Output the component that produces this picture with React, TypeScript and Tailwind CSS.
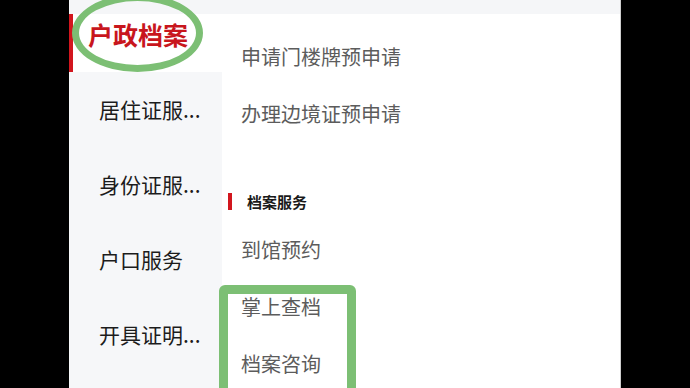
import React from 'react';

const font = { fontFamily: '"Noto Sans CJK SC", "Noto Sans", sans-serif' };

const sideItems = ['居住证服...', '身份证服...', '户口服务', '开具证明...'];

const App: React.FC = () => {
  return (
    <div className="relative w-[690px] h-[388px] bg-black flex overflow-hidden" style={font}>
      <div className="w-[69px] shrink-0" />
      <div className="w-[552px] shrink-0 flex flex-col bg-white border-r border-[#cfcfcf]">
        <div className="h-[14px] shrink-0 bg-[#f5f6f8]" />
        <div className="flex flex-1">
          {/* sidebar */}
          <div className="w-[153px] shrink-0 flex flex-col bg-[#f6f7f9]">
            <div className="relative h-[58px] bg-white flex items-center pl-[19px] pb-[18px]">
              <div className="absolute left-0 top-0 h-full w-[4px] bg-[#d2161e]" />
              <span className="text-[25px] font-bold text-[#c8161d] leading-none">户政档案</span>
            </div>
            {sideItems.map(item => (
              <div key={item} className="h-[75px] flex items-center pl-[30px]">
                <span className="text-[21px] text-[#1c1c1c] leading-none whitespace-nowrap">{item}</span>
              </div>
            ))}
          </div>

          {/* content */}
          <div className="flex-1 flex flex-col pt-[14px]">
            {['申请门楼牌预申请', '办理边境证预申请'].map(t => (
              <div key={t} className="h-[57px] flex items-center pl-[19px] text-[20px] text-[#5c5c5c] leading-none">
                {t}
              </div>
            ))}
            <div className="mt-[39px] h-[40px] flex items-center pl-[6px]">
              <div className="w-[4px] h-[17px] bg-[#d2161e]" />
              <span className="ml-[15px] text-[15px] font-bold text-[#1a1a1a] leading-none">档案服务</span>
            </div>
            {['到馆预约', '掌上查档', '档案咨询'].map(t => (
              <div key={t} className="h-[57px] shrink-0 flex items-center pl-[19px] text-[20px] text-[#5c5c5c] leading-none">
                {t}
              </div>
            ))}
          </div>
        </div>
      </div>
      <div className="flex-1" />

      {/* annotation marks */}
      <div className="absolute left-[72px] top-[-6px] w-[131px] h-[78px] rounded-[50%] border-[7px] border-[#7cbf74]" />
      <div className="absolute left-[219px] top-[285px] w-[137px] h-[120px] rounded-[6px] border-[9px] border-[#7cbf74]" />
    </div>
  );
};

export default App;
